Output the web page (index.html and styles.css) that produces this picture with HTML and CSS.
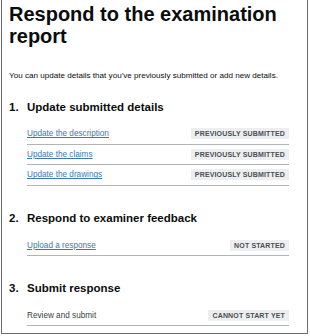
FILE: index.html
```html
<!DOCTYPE html>
<html lang="en">
<head>
    <meta charset="UTF-8">
    <meta name="viewport" content="width=device-width, initial-scale=1.0">
    <title>Respond to the examination report</title>
    <link rel="stylesheet" href="styles.css">
</head>
<body>
    <div class="frame">
        <h1>Respond to the examination report</h1>
        <p class="lead">You can update details that you've previously submitted or add new details.</p>

        <!-- Section 1 -->
        <div class="section">
            <h2><span class="num">1.</span>Update submitted details</h2>
            <ul class="tasks">
                <li class="task">
                    <a href="#">Update the description</a>
                    <strong class="tag">Previously submitted</strong>
                </li>
                <li class="task">
                    <a href="#">Update the claims</a>
                    <strong class="tag">Previously submitted</strong>
                </li>
                <li class="task">
                    <a href="#">Update the drawings</a>
                    <strong class="tag">Previously submitted</strong>
                </li>
            </ul>
        </div>

        <!-- Section 2 -->
        <div class="section">
            <h2><span class="num">2.</span>Respond to examiner feedback</h2>
            <ul class="tasks">
                <li class="task">
                    <a href="#">Upload a response</a>
                    <strong class="tag">Not started</strong>
                </li>
            </ul>
        </div>

        <!-- Section 3 -->
        <div class="section">
            <h2><span class="num">3.</span>Submit response</h2>
            <ul class="tasks">
                <li class="task">
                    <span class="plain">Review and submit</span>
                    <strong class="tag">Cannot start yet</strong>
                </li>
            </ul>
        </div>
    </div>
</body>
</html>
```

FILE: styles.css
```css
body {
    margin: 0;
    font-family: "Liberation Sans", Arial, sans-serif;
    color: #0b0c0c;
    background: #fff;
}
.frame {
    width: 307px;
    height: 334px;
    box-sizing: border-box;
    overflow: hidden;
    margin-left: 1px;
    padding: 3px 18px 0 7px;
    border: 1px solid #6b6b6b;
    border-top: none;
}
h1 {
    font-size: 20px;
    line-height: 22px;
    font-weight: bold;
    margin: 0;
}
.lead {
    font-size: 8.1px;
    line-height: 12px;
    margin: 23px 0 0;
}
.section {
    margin-top: 25.5px;
}
.section:first-of-type {
    margin-top: 18px;
}
h2 {
    font-size: 11.5px;
    line-height: 14px;
    font-weight: bold;
    margin: 0 0 10px;
}
.num {
    display: inline-block;
    width: 18px;
}
.tasks {
    list-style: none;
    margin: 0 0 0 18px;
    padding: 0;
}
.task {
    display: flex;
    justify-content: space-between;
    align-items: center;
    height: 20.6px;
    box-sizing: border-box;
    border-bottom: 1px solid #b1b4b6;
    font-size: 8.2px;
}
.task a {
    color: #3a78b5;
    text-decoration: underline;
    text-underline-offset: 1px;
}
.plain {
    color: #383f43;
}
.tag {
    display: inline-block;
    font-size: 7px;
    line-height: 11px;
    font-weight: bold;
    text-transform: uppercase;
    letter-spacing: 0.15px;
    padding: 0 4px;
    background: #eceeef;
    color: #4a5055;
}
```
